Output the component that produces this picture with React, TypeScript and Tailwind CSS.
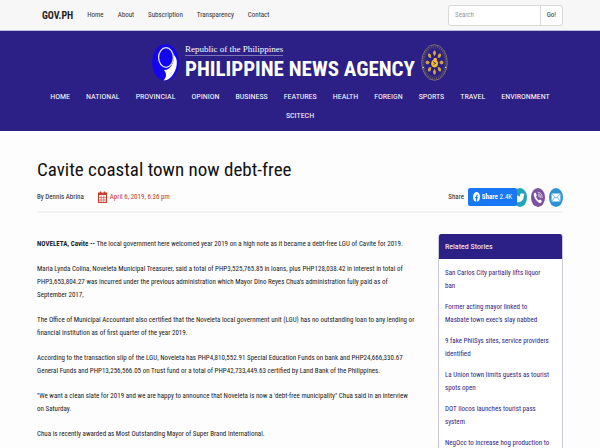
import type { ReactNode } from "react";

const topLinks = ["Home", "About", "Subscription", "Transparency", "Contact"];

const sections = [
  "HOME",
  "NATIONAL",
  "PROVINCIAL",
  "OPINION",
  "BUSINESS",
  "FEATURES",
  "HEALTH",
  "FOREIGN",
  "SPORTS",
  "TRAVEL",
  "ENVIRONMENT",
  "SCITECH",
];

const stories: string[][] = [
  ["San Carlos City partially lifts liquor", "ban"],
  ["Former acting mayor linked to", "Masbate town exec's slay nabbed"],
  ["9 fake PhilSys sites, service providers", "identified"],
  ["La Union town limits guests as tourist", "spots open"],
  ["DOT Ilocos launches tourist pass", "system"],
  ["NegOcc to increase hog production to"],
];

const paragraphs: string[][] = [
  [
    "Maria Lynda Colina, Noveleta Municipal Treasurer, said a total of PHP3,525,765.85 in loans, plus PHP128,038.42 in interest in total of",
    "PHP3,653,804.27 was incurred under the previous administration which Mayor Dino Reyes Chua's administration fully paid as of",
    "September 2017,",
  ],
  [
    "The Office of Municipal Accountant also certified that the Noveleta local government unit (LGU) has no outstanding loan to any lending or",
    "financial institution as of first quarter of the year 2019.",
  ],
  [
    "According to the transaction slip of the LGU, Noveleta has PHP4,810,552.91 Special Education Funds on bank and PHP24,666,330.67",
    "General Funds and PHP13,256,566.05 on Trust fund or a total of PHP42,733,449.63 certified by Land Bank of the Philippines.",
  ],
  [
    "\"We want a clean slate for 2019 and we are happy to announce that Noveleta is now a 'debt-free municipality\" Chua said in an interview",
    "on Saturday.",
  ],
  ["Chua is recently awarded as Most Outstanding Mayor of Super Brand International."],
];

function Lines({ lines }: { lines: string[] }) {
  return (
    <>
      {lines.map((line) => (
        <span key={line} className="block whitespace-nowrap">
          {line}
        </span>
      ))}
    </>
  );
}

function Emblem() {
  return (
    <svg className="h-[37px] w-[27px] shrink-0" viewBox="0 0 27 37" aria-hidden="true">
      <ellipse cx="13.5" cy="18.5" rx="13.3" ry="18.2" fill="#1205f0" />
      <path
        d="M22 11 C26 15 25.5 22 22.5 28 C20 33 16 36.5 11.5 36.5 C14.5 33 15 30 12 26 C17.5 26.5 22.5 20 22 11Z"
        fill="#fff"
      />
      <ellipse cx="14" cy="13.5" rx="7.4" ry="9.8" fill="#1205f0" stroke="#e6e6ff" strokeWidth="1.3" />
    </svg>
  );
}

const rays = [0, 45, 90, 135, 180, 225, 270, 315];

function Seal() {
  return (
    <svg className="h-[37px] w-[27px] shrink-0" viewBox="0 0 27 37" aria-hidden="true">
      <ellipse cx="13.5" cy="18.5" rx="12.8" ry="17.8" fill="#2b2175" stroke="#96876f" strokeWidth="0.8" />
      <ellipse
        cx="13.5"
        cy="18.5"
        rx="11.3"
        ry="16"
        fill="none"
        stroke="#a08a66"
        strokeWidth="1.8"
        strokeDasharray="1.2 0.9"
        opacity="0.5"
      />
      <ellipse cx="13.5" cy="18.5" rx="10" ry="14.2" fill="#2a1f86" stroke="#5a4d84" strokeWidth="0.4" />
      <g transform="translate(13.5 18.5) scale(1 1.36)" fill="#cfa544">
        {rays.map((angle) => (
          <path key={angle} transform={`rotate(${angle})`} d="M0 -4.6 L-1.5 -6.6 Q-1.5 -8.7 0 -9 Q1.5 -8.7 1.5 -6.6Z" />
        ))}
      </g>
      <ellipse cx="13.6" cy="19.6" rx="3.4" ry="3.8" fill="#f8bd21" />
      <circle cx="14.2" cy="15.4" r="1.7" fill="#f8bd21" />
      <path d="M12 17.6 L14.8 19.4 L12.6 20.4" fill="none" stroke="#2a1f86" strokeWidth="0.8" />
      <circle cx="2.3" cy="23.5" r="0.7" fill="#e8dfc0" />
      <circle cx="24.7" cy="23.5" r="0.7" fill="#e8dfc0" />
    </svg>
  );
}

function CalendarIcon() {
  return (
    <svg className="h-3 w-[9px]" viewBox="0 0 9 12" fill="none" stroke="#c0392b" aria-hidden="true">
      <rect x="0.5" y="2" width="8" height="9.4" />
      <path d="M0.5 3.2H8.5" strokeWidth="1.8" />
      <path d="M2.5 0.4V3M6.5 0.4V3" strokeWidth="1.3" />
      <path d="M3.2 5V11.4M5.8 5V11.4M0.5 6.6H8.5M0.5 9H8.5" strokeWidth="0.6" />
    </svg>
  );
}

function ShareIcon({ label, color, children }: { label: string; color: string; children: ReactNode }) {
  return (
    <a href="#" aria-label={label}>
      <svg className="h-[19px] w-3.5" viewBox="0 0 14 19">
        <ellipse cx="7" cy="9.5" rx="7" ry="9.5" fill={color} />
        {children}
      </svg>
    </a>
  );
}

export default function App() {
  return (
    <div className="h-screen overflow-hidden bg-[#fdfdfd] font-['Roboto_Condensed','Liberation_Sans',sans-serif] text-[7px] leading-[13px] text-[#222]">
      <div className="flex h-[31px] items-center justify-between border-b border-[#bcb8dc] bg-[#f7f7f7] pr-[37px] pl-[42px]">
        <nav className="flex items-center gap-3.5 text-[#333]">
          <a href="#" className="text-[10px] font-bold text-[#222]">
            GOV.PH
          </a>
          {topLinks.map((item) => (
            <a key={item} href="#">
              {item}
            </a>
          ))}
        </nav>
        <form className="flex h-[21px] w-[115px] rounded-[3px] border border-[#d8d8d8] bg-white">
          <input
            type="search"
            aria-label="Search"
            placeholder="Search"
            className="w-0 min-w-0 flex-1 px-1.5 outline-none placeholder:text-[#999]"
          />
          <button type="button" className="border-l border-[#d8d8d8] px-1.5 text-[#333]">
            Go!
          </button>
        </form>
      </div>

      <header className="bg-[#2c1f86] px-[37px] pt-3 pb-1.5 text-white">
        <div className="flex items-center justify-center gap-1.5">
          <Emblem />
          <div className="flex flex-col items-start">
            <span className="border-b border-[#7f78b8] font-['Liberation_Serif',serif] text-[9px] leading-[12px]">
              Republic of the Philippines
            </span>
            <span className="text-[21px] leading-[26px] font-bold whitespace-nowrap">PHILIPPINE NEWS AGENCY</span>
          </div>
          <Seal />
        </div>
        <nav className="mt-[5px] flex flex-wrap justify-center gap-x-4 text-[8px] leading-[19px]">
          {sections.map((item) => (
            <a key={item} href="#">
              {item}
            </a>
          ))}
        </nav>
      </header>

      <main className="px-[37px] pt-[26px]">
        <h1 className="text-[19px] leading-[26px] text-[#111]">Cavite coastal town now debt-free</h1>
        <div className="flex h-[30px] items-center justify-between border-b-2 border-[#f3f3f3]">
          <div className="flex items-center">
            <span>By Dennis Abrina</span>
            <span className="ml-3.5 flex items-center gap-[3px] text-[#c0392b]">
              <CalendarIcon />
              April 6, 2019, 6:36 pm
            </span>
          </div>
          <div className="flex items-center">
            <span className="mr-1">Share</span>
            <button
              type="button"
              className="z-10 -mr-1 flex h-[18px] w-[49px] items-center justify-center gap-[2px] rounded-[2px] bg-[#1877f2] whitespace-nowrap text-white"
            >
              <svg className="h-2.5 w-[7px] shrink-0" viewBox="0 0 7 10" aria-hidden="true">
                <ellipse cx="3.5" cy="5" rx="3.5" ry="5" fill="#fff" />
                <path d="M3.1 10V6.4H2.2V5H3.1V4Q3.1 2.2 4.9 2.5V3.6Q4.1 3.5 4.1 4.2V5H4.9L4.7 6.4H4.1V10Z" fill="#1877f2" />
              </svg>
              <span>
                <b>Share</b> 2.4K
              </span>
            </button>
            <div className="flex gap-1">
              <ShareIcon label="Twitter" color="#23a3b8">
                <path
                  d="M11.6 6.3L10.8 7.6Q10.9 14 5.5 14.2Q3.5 14.2 2.2 13.2Q3.8 13.2 4.8 12.3Q3.6 12 3.1 10.8H4Q2.6 10 2.5 8.4L3.3 8.7Q2.2 7.3 2.9 5.7Q4.5 8.2 7 8.4Q6.7 5.3 8.9 5.2Q9.7 5.2 10.2 5.9L11.5 5.3L10.8 6.5Z"
                  fill="#fff"
                />
              </ShareIcon>
              <ShareIcon label="Viber" color="#7c519f">
                <path
                  d="M3.6 4.7Q2.4 5.4 2.8 7.2Q4.3 12.6 8.4 14.9Q9.8 15.4 10.8 13.5Q11 12.7 9.1 11.5Q8.5 11.4 7.9 12.4Q5.8 11.3 5 8.6L5.8 7.7Q5.6 5.9 4.3 4.6Z"
                  fill="#fff"
                />
                <path
                  d="M6.8 4.2Q11.2 4.6 11.2 10.2M7 5.9Q9.6 6.4 9.7 9.8M7.2 7.5Q8.3 7.8 8.4 9.4"
                  fill="none"
                  stroke="#fff"
                  strokeWidth="0.7"
                />
              </ShareIcon>
              <ShareIcon label="Email" color="#2b93d1">
                <rect x="2.6" y="5.6" width="8.8" height="8" rx="0.8" fill="#fff" />
                <path
                  d="M2.9 6.2L7 10.2L11.1 6.2M2.9 13.1L5.7 9.3M11.1 13.1L8.3 9.3"
                  fill="none"
                  stroke="#2b93d1"
                  strokeWidth="0.7"
                />
              </ShareIcon>
            </div>
          </div>
        </div>

        <div className="mt-[21px] flex items-start justify-between">
          <article className="flex min-w-0 flex-col gap-3 pt-1">
            <p className="whitespace-nowrap">
              <b>NOVELETA, Cavite --</b> The local government here welcomed year 2019 on a high note as it became a
              debt-free LGU of Cavite for 2019.
            </p>
            {paragraphs.map((lines) => (
              <p key={lines[0]}>
                <Lines lines={lines} />
              </p>
            ))}
          </article>

          <aside className="w-[125px] shrink-0 overflow-hidden rounded-t-[3px] border-x border-[#cbc8dc] bg-white">
            <h2 className="-mx-px bg-[#2c1f86] px-[7px] text-[8px] leading-[25px] text-white">Related Stories</h2>
            <ul className="flex flex-col gap-2 px-1.5 pt-2 pb-6 text-[#2c1f86]">
              {stories.map((lines) => (
                <li key={lines[0]}>
                  <a href="#">
                    <Lines lines={lines} />
                  </a>
                </li>
              ))}
            </ul>
          </aside>
        </div>
      </main>
    </div>
  );
}
